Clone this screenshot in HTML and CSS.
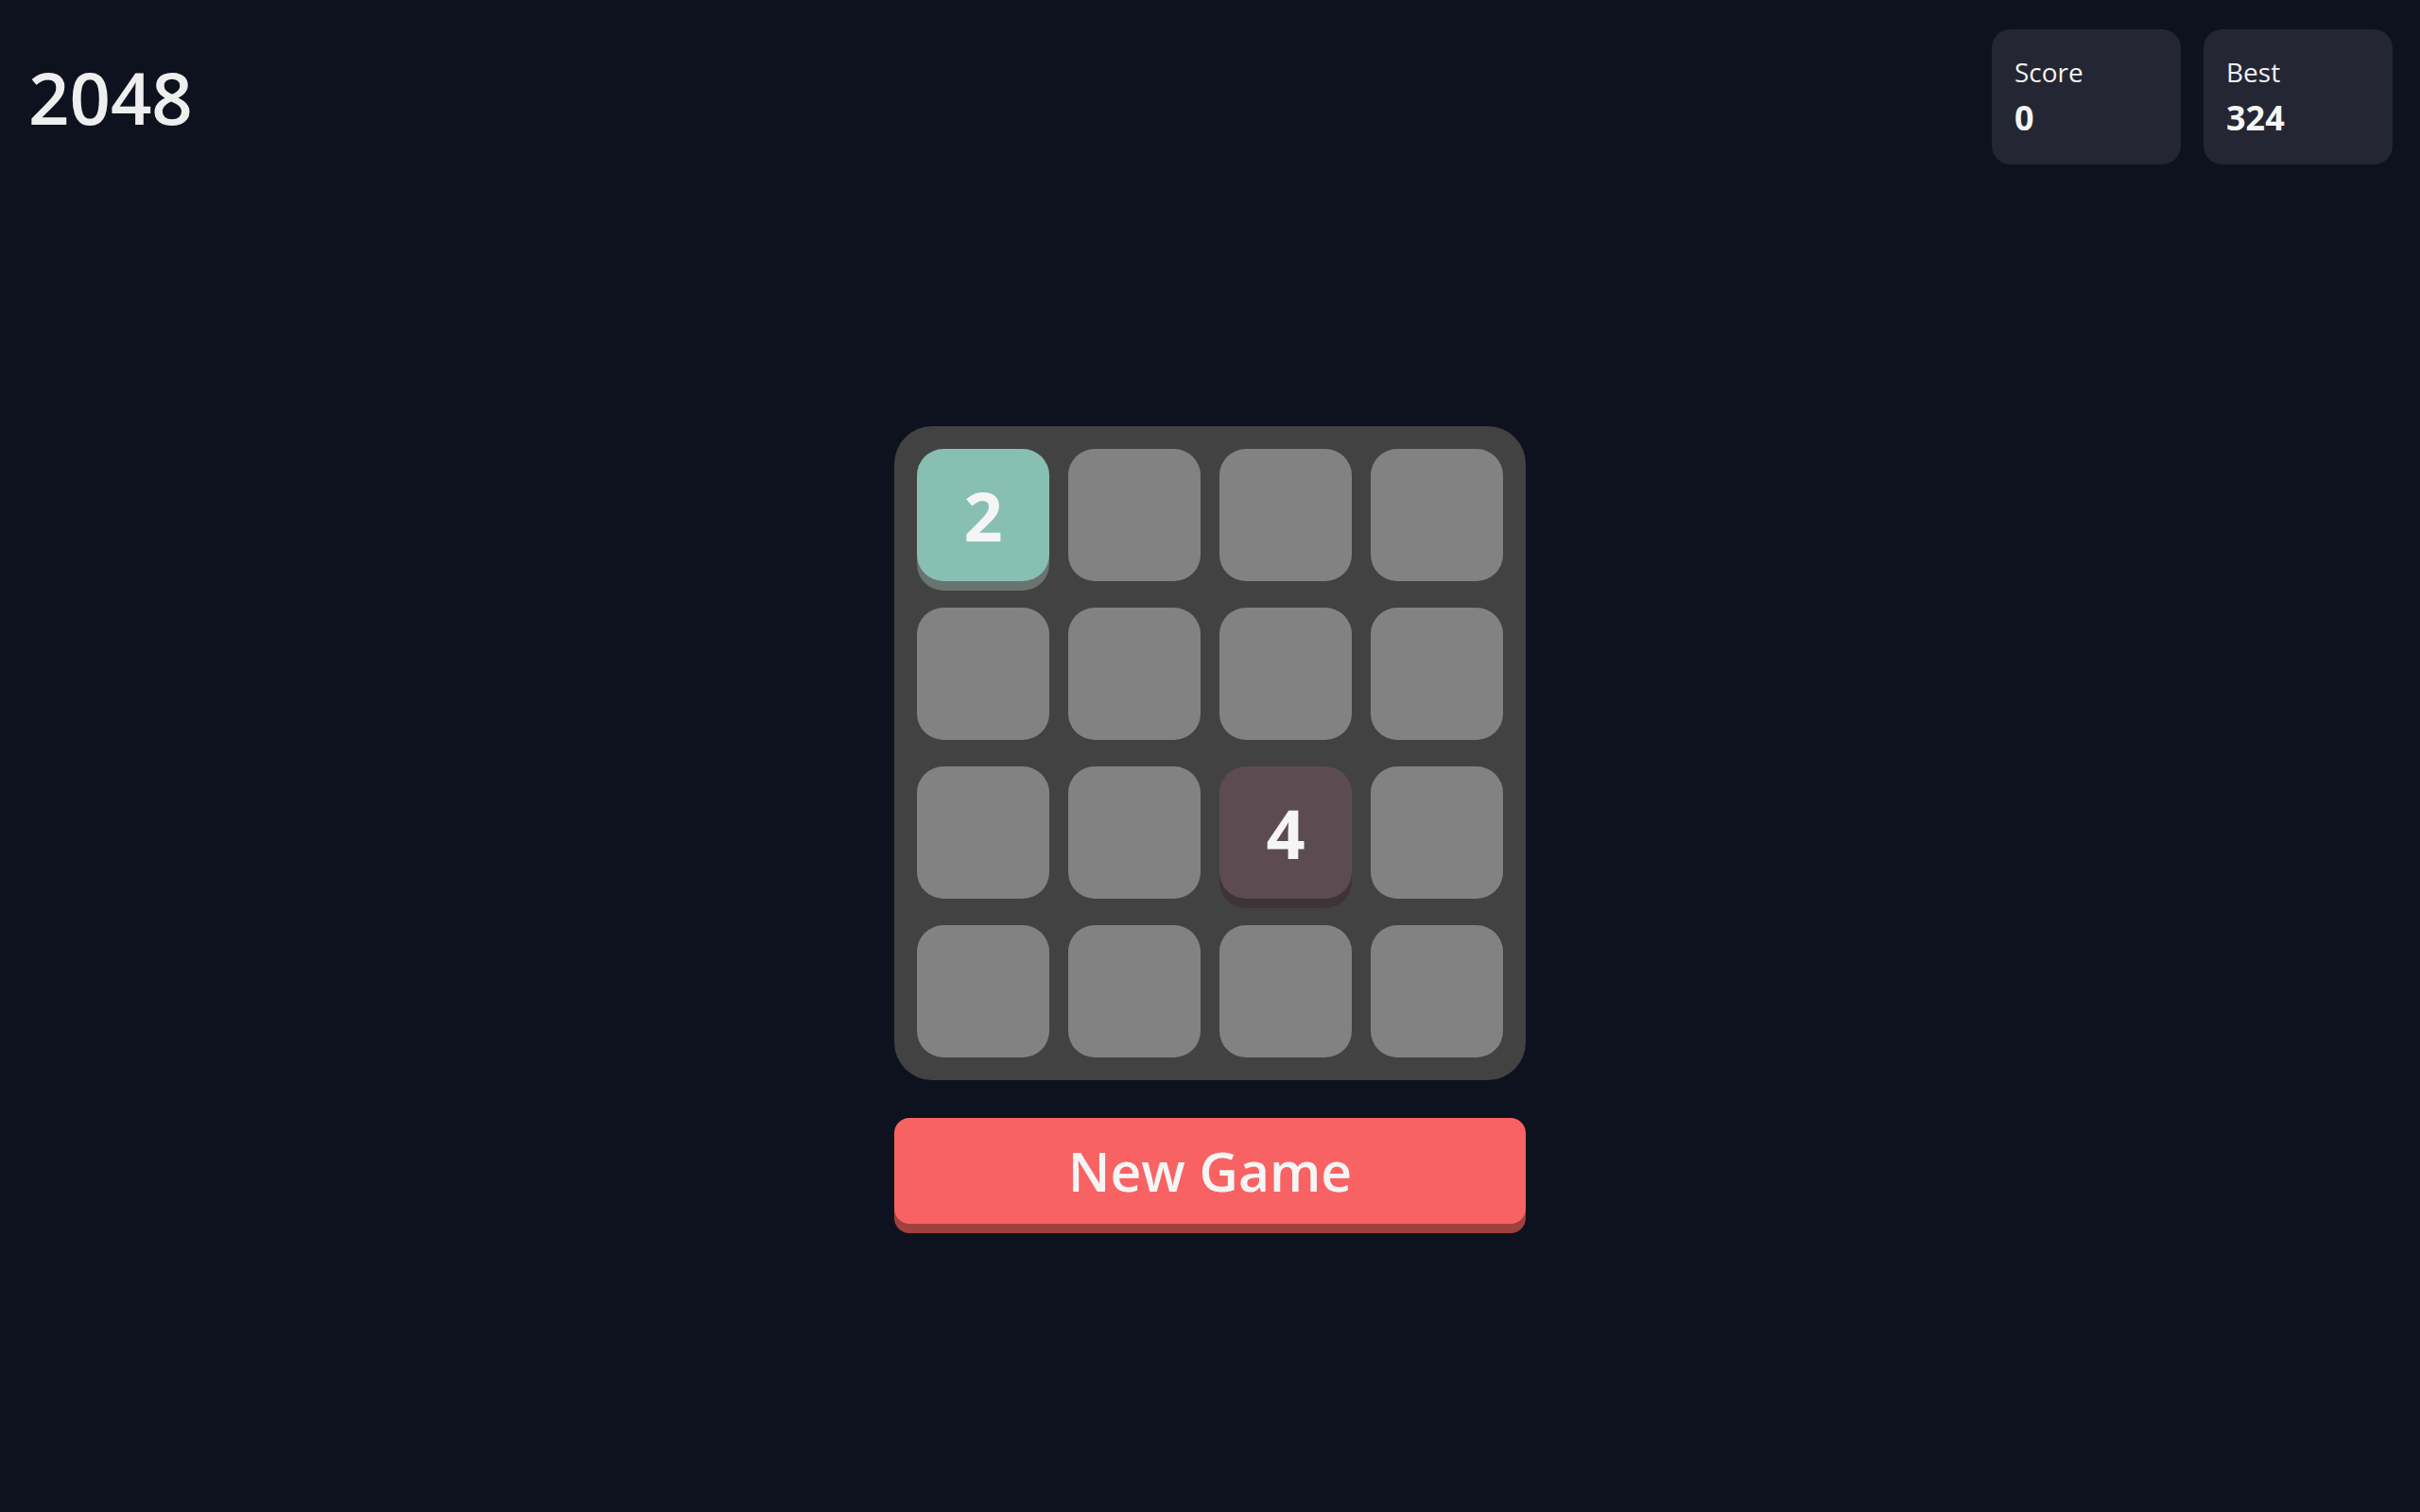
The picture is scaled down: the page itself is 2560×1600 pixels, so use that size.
FILE: index.html
```html
<!DOCTYPE html>

<html>
	<head>
		<title>2048</title>
		<link rel="stylesheet" href="styles.css">
	</head>
	<body>
		<div id="header">
			<h1 id="title">2048</h1>
			<div id="scores">
				<div class="scoreBox">
					<div class="scoreLabel">Score</div>
					<div class="scoreValue" id="score">0</div>
				</div>
				<div class="scoreBox">
					<div class="scoreLabel">Best</div>
					<div class="scoreValue" id="best">324</div>
				</div>
			</div>
		</div>

		<div id="game">
			<div id="board">
				<div class="tile tile2">2</div>
				<div class="tile"></div>
				<div class="tile"></div>
				<div class="tile"></div>

				<div class="tile"></div>
				<div class="tile"></div>
				<div class="tile"></div>
				<div class="tile"></div>

				<div class="tile"></div>
				<div class="tile"></div>
				<div class="tile tile4">4</div>
				<div class="tile"></div>

				<div class="tile"></div>
				<div class="tile"></div>
				<div class="tile"></div>
				<div class="tile"></div>
			</div>
			<button id="newGame">New Game</button>
		</div>
	</body>
</html>
```

FILE: styles.css
```css
*
	{
		box-sizing: border-box;
	}
body
	{
		margin: 0;
		min-height: 100vh;
		background-color: #0e121e;
		color: #eeeeee;
		font-family: "Open Sans", "Noto Sans", sans-serif;
	}
#header
	{
		display: flex;
		justify-content: space-between;
		align-items: center;
		padding: 31px 29px 0 30px;
	}
#title
	{
		margin: 0;
		font-size: 76px;
		font-weight: 600;
		line-height: 1;
		color: #eeeeee;
	}
#scores
	{
		display: flex;
		gap: 24px;
	}
.scoreBox
	{
		width: 200px;
		height: 143px;
		padding: 26px 24px;
		border-radius: 20px;
		background-color: #242633;
	}
.scoreLabel
	{
		font-size: 28px;
		line-height: 38px;
		color: #f2f2f2;
	}
.scoreValue
	{
		margin-top: 8px;
		font-size: 36px;
		font-weight: 700;
		line-height: 44px;
		color: #f5f5f5;
	}
#game
	{
		display: flex;
		flex-direction: column;
		align-items: center;
		gap: 40px;
		padding-top: 277px;
	}
#board
	{
		display: grid;
		grid-template-columns: repeat(4, 140px);
		grid-auto-rows: 140px;
		column-gap: 20px;
		row-gap: 28px;
		padding: 24px;
		border-radius: 40px;
		background-color: #424242;
	}
.tile
	{
		display: flex;
		align-items: center;
		justify-content: center;
		border-radius: 28px;
		background-color: #828282;
		font-size: 72px;
		font-weight: 700;
		color: #f5f5f5;
	}
.tile2
	{
		background-color: #87bfb3;
		box-shadow: 0 10px 0 #69736f;
	}
.tile4
	{
		background-color: #5c4c52;
		box-shadow: 0 10px 0 #3e3339;
	}
#newGame
	{
		width: 668px;
		height: 112px;
		border: none;
		border-radius: 16px;
		background-color: #f96262;
		box-shadow: 0 10px 0 #a0403f;
		color: #f5f5f5;
		font-family: "Open Sans", "Noto Sans", sans-serif;
		font-size: 57px;
		font-weight: 600;
		cursor: pointer;
	}
```
